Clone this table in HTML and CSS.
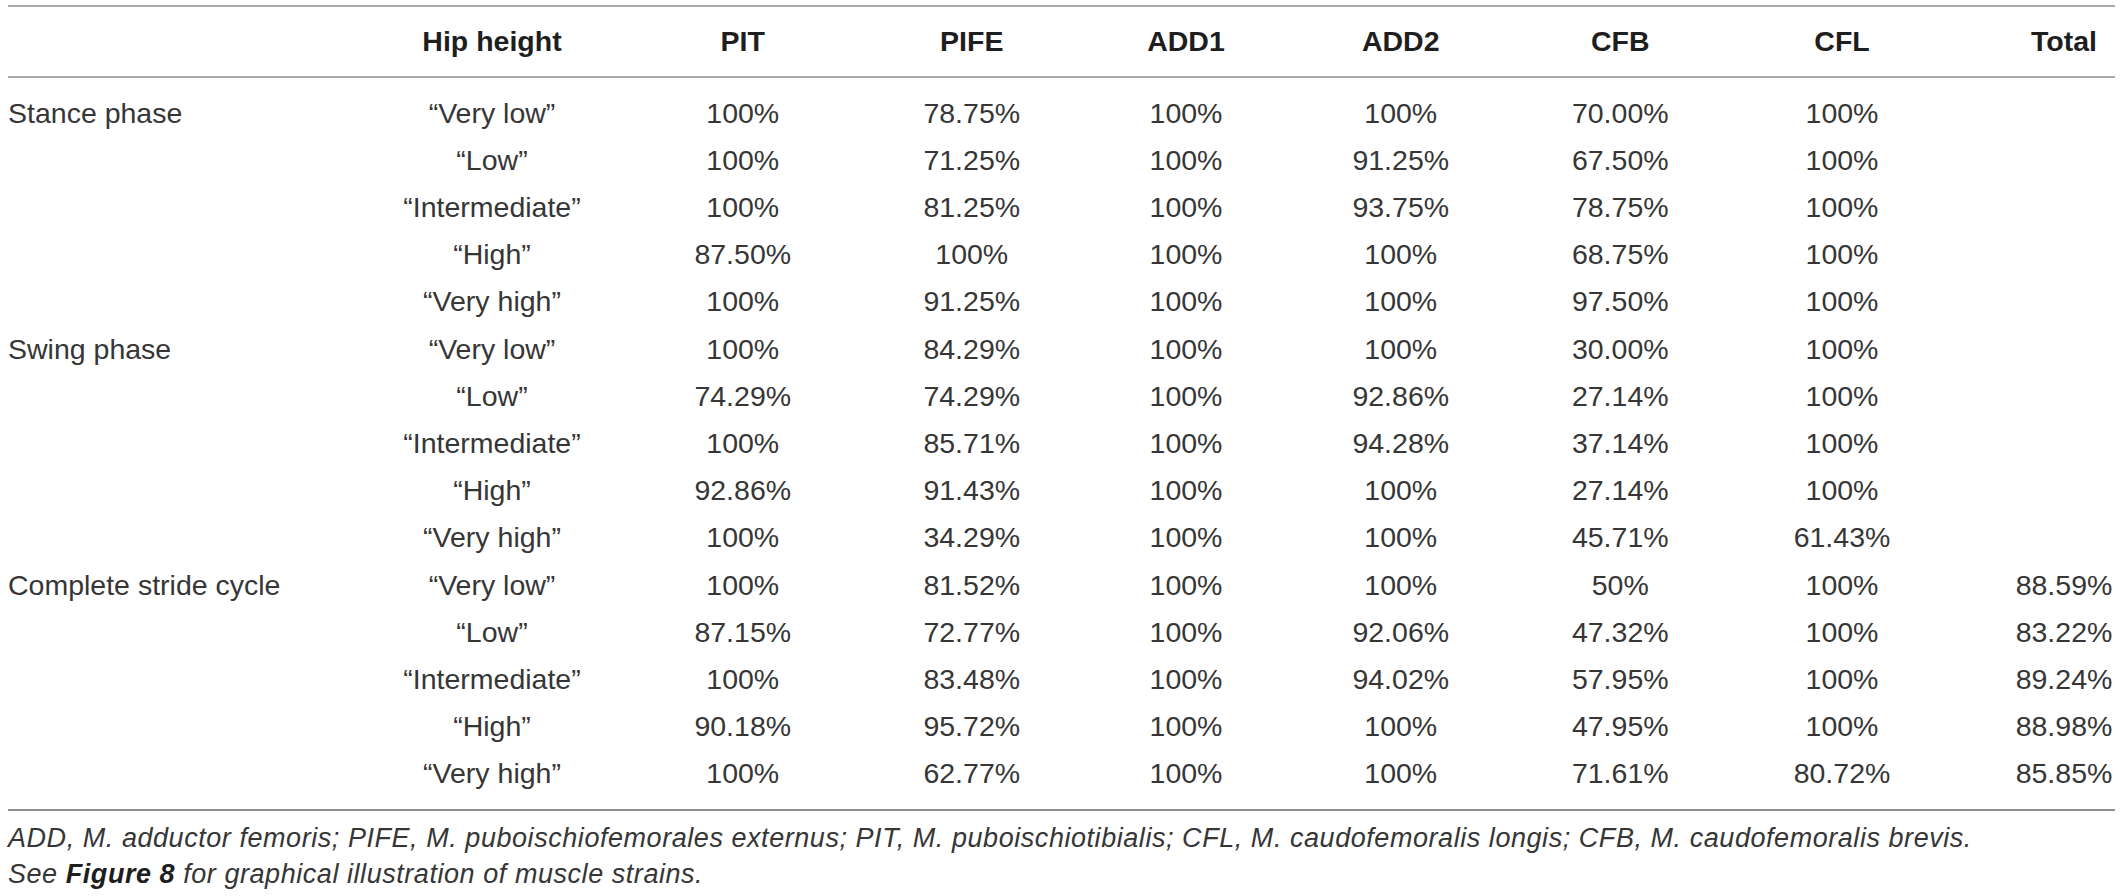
FILE: index.html
```html
<!DOCTYPE html>
<html lang="en">
<head>
<meta charset="utf-8">
<title>Muscle strain table</title>
<link rel="stylesheet" href="styles.css">
</head>
<body>
<div class="page">
  <table class="data">
    <colgroup>
      <col class="c-group">
      <col class="c-hip">
      <col class="c-pit">
      <col class="c-pife">
      <col class="c-add1">
      <col class="c-add2">
      <col class="c-cfb">
      <col class="c-cfl">
      <col class="c-total">
    </colgroup>
    <thead>
      <tr>
        <th class="lead"></th>
        <th>Hip height</th>
        <th>PIT</th>
        <th>PIFE</th>
        <th>ADD1</th>
        <th>ADD2</th>
        <th>CFB</th>
        <th>CFL</th>
        <th class="tot">Total</th>
      </tr>
    </thead>
    <tbody>
      <tr class="first">
        <td class="lead">Stance phase</td><td>“Very low”</td><td>100%</td><td>78.75%</td><td>100%</td><td>100%</td><td>70.00%</td><td>100%</td><td class="tot"></td>
      </tr>
      <tr>
        <td class="lead"></td><td>“Low”</td><td>100%</td><td>71.25%</td><td>100%</td><td>91.25%</td><td>67.50%</td><td>100%</td><td class="tot"></td>
      </tr>
      <tr>
        <td class="lead"></td><td>“Intermediate”</td><td>100%</td><td>81.25%</td><td>100%</td><td>93.75%</td><td>78.75%</td><td>100%</td><td class="tot"></td>
      </tr>
      <tr>
        <td class="lead"></td><td>“High”</td><td>87.50%</td><td>100%</td><td>100%</td><td>100%</td><td>68.75%</td><td>100%</td><td class="tot"></td>
      </tr>
      <tr>
        <td class="lead"></td><td>“Very high”</td><td>100%</td><td>91.25%</td><td>100%</td><td>100%</td><td>97.50%</td><td>100%</td><td class="tot"></td>
      </tr>
      <tr>
        <td class="lead">Swing phase</td><td>“Very low”</td><td>100%</td><td>84.29%</td><td>100%</td><td>100%</td><td>30.00%</td><td>100%</td><td class="tot"></td>
      </tr>
      <tr>
        <td class="lead"></td><td>“Low”</td><td>74.29%</td><td>74.29%</td><td>100%</td><td>92.86%</td><td>27.14%</td><td>100%</td><td class="tot"></td>
      </tr>
      <tr>
        <td class="lead"></td><td>“Intermediate”</td><td>100%</td><td>85.71%</td><td>100%</td><td>94.28%</td><td>37.14%</td><td>100%</td><td class="tot"></td>
      </tr>
      <tr>
        <td class="lead"></td><td>“High”</td><td>92.86%</td><td>91.43%</td><td>100%</td><td>100%</td><td>27.14%</td><td>100%</td><td class="tot"></td>
      </tr>
      <tr>
        <td class="lead"></td><td>“Very high”</td><td>100%</td><td>34.29%</td><td>100%</td><td>100%</td><td>45.71%</td><td>61.43%</td><td class="tot"></td>
      </tr>
      <tr>
        <td class="lead">Complete stride cycle</td><td>“Very low”</td><td>100%</td><td>81.52%</td><td>100%</td><td>100%</td><td>50%</td><td>100%</td><td class="tot">88.59%</td>
      </tr>
      <tr>
        <td class="lead"></td><td>“Low”</td><td>87.15%</td><td>72.77%</td><td>100%</td><td>92.06%</td><td>47.32%</td><td>100%</td><td class="tot">83.22%</td>
      </tr>
      <tr>
        <td class="lead"></td><td>“Intermediate”</td><td>100%</td><td>83.48%</td><td>100%</td><td>94.02%</td><td>57.95%</td><td>100%</td><td class="tot">89.24%</td>
      </tr>
      <tr>
        <td class="lead"></td><td>“High”</td><td>90.18%</td><td>95.72%</td><td>100%</td><td>100%</td><td>47.95%</td><td>100%</td><td class="tot">88.98%</td>
      </tr>
      <tr class="last">
        <td class="lead"></td><td>“Very high”</td><td>100%</td><td>62.77%</td><td>100%</td><td>100%</td><td>71.61%</td><td>80.72%</td><td class="tot">85.85%</td>
      </tr>
    </tbody>
  </table>
  <div class="notes">
    <p>ADD, M. adductor femoris; PIFE, M. puboischiofemorales externus; PIT, M. puboischiotibialis; CFL, M. caudofemoralis longis; CFB, M. caudofemoralis brevis.</p>
    <p>See <b>Figure 8</b> for graphical illustration of muscle strains.</p>
  </div>
</div>
</body>
</html>
```

FILE: styles.css
```css
html, body {
  margin: 0;
  padding: 0;
  background: #ffffff;
}

.page {
  padding: 5px 5px 0 8px;
  font-family: "Liberation Sans", Arial, sans-serif;
  color: #363636;
}

.data {
  width: 2107px;
  table-layout: fixed;
  border-collapse: collapse;
  border-spacing: 0;
}

.c-group { width: 354px; }
.c-hip   { width: 260px; }
.c-pit   { width: 241.5px; }
.c-pife  { width: 216.5px; }
.c-add1  { width: 212px; }
.c-add2  { width: 217.5px; }
.c-cfb   { width: 221.5px; }
.c-cfl   { width: 222px; }
.c-total { width: 162px; }

.data th,
.data td {
  padding: 0;
  text-align: center;
  white-space: nowrap;
  font-size: 28.5px;
}

.data thead tr {
  border-top: 2px solid #a9a9a9;
  border-bottom: 2px solid #a9a9a9;
}

.data th {
  height: 69px;
  line-height: 69px;
  font-weight: bold;
  color: #1e1e1e;
}

.data td {
  line-height: 47.2px;
  font-weight: normal;
}

.data tr.first td { padding-top: 11.5px; }
.data tr.last td { padding-bottom: 11.5px; }

.data tbody tr.last {
  border-bottom: 2px solid #8e8e8e;
}

.data .lead {
  text-align: left;
}

.data .tot {
  padding-left: 60px;
}

.notes {
  margin-top: 9px;
  font-size: 27px;
  letter-spacing: 0.55px;
  line-height: 36px;
  font-style: italic;
  color: #363636;
}

.notes p {
  margin: 0;
}

.notes b {
  font-weight: bold;
  color: #1e1e1e;
}
```
